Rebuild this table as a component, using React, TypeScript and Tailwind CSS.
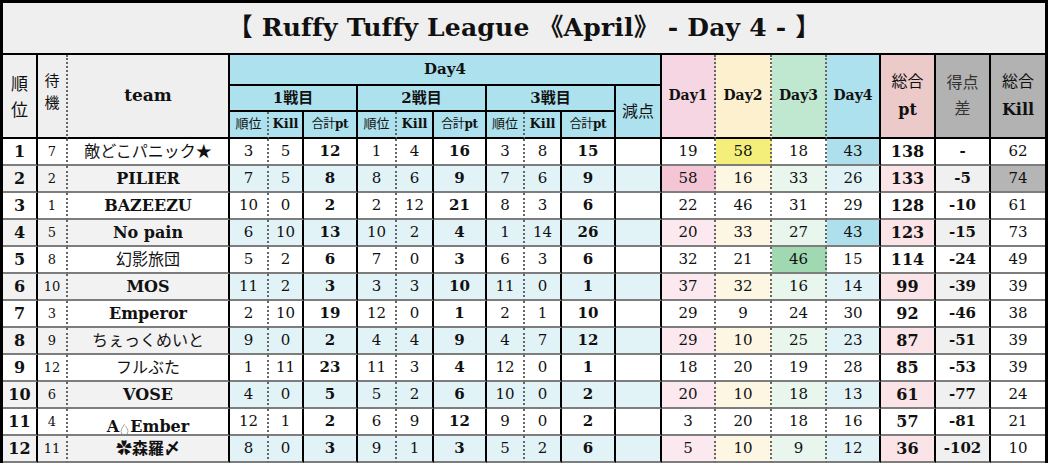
import React from 'react';

type Row = (string | number)[];

const rows: Row[] = [
  [1, 7, '敵どこパニック★', 3, 5, 12, 1, 4, 16, 3, 8, 15, '', 19, 58, 18, 43, 138, '-', 62],
  [2, 2, 'PILIER', 7, 5, 8, 8, 6, 9, 7, 6, 9, '', 58, 16, 33, 26, 133, -5, 74],
  [3, 1, 'BAZEEZU', 10, 0, 2, 2, 12, 21, 8, 3, 6, '', 22, 46, 31, 29, 128, -10, 61],
  [4, 5, 'No pain', 6, 10, 13, 10, 2, 4, 1, 14, 26, '', 20, 33, 27, 43, 123, -15, 73],
  [5, 8, '幻影旅団', 5, 2, 6, 7, 0, 3, 6, 3, 6, '', 32, 21, 46, 15, 114, -24, 49],
  [6, 10, 'MOS', 11, 2, 3, 3, 3, 10, 11, 0, 1, '', 37, 32, 16, 14, 99, -39, 39],
  [7, 3, 'Emperor', 2, 10, 19, 12, 0, 1, 2, 1, 10, '', 29, 9, 24, 30, 92, -46, 38],
  [8, 9, 'ちぇっくめいと', 9, 0, 2, 4, 4, 9, 4, 7, 12, '', 29, 10, 25, 23, 87, -51, 39],
  [9, 12, 'フルぶた', 1, 11, 23, 11, 3, 4, 12, 0, 1, '', 18, 20, 19, 28, 85, -53, 39],
  [10, 6, 'VOSE', 4, 0, 5, 5, 2, 6, 10, 0, 2, '', 20, 10, 18, 13, 61, -77, 24],
  [11, 4, 'A Ember', 12, 1, 2, 6, 9, 12, 9, 0, 2, '', 3, 20, 18, 16, 57, -81, 21],
  [12, 11, '✿森羅〆', 8, 0, 3, 9, 1, 3, 5, 2, 6, '', 5, 10, 9, 12, 36, -102, 10],
];

// column styles: right border, font, odd bg, even bg
const SOLID = 'border-r-2 border-r-black';
const DOT = 'border-r-2 border-r-[#666] [border-right-style:dotted]';
const cyan = 'bg-[#e2f3f8]';

const cols: { border: string; text: string; odd: string; even: string }[] = [
  { border: SOLID, text: 'font-bold text-[16px]', odd: 'bg-white', even: 'bg-[#f2f2f2]' },
  { border: DOT, text: 'text-[13px]', odd: 'bg-white', even: 'bg-[#f2f2f2]' },
  { border: SOLID, text: 'text-[16px]', odd: 'bg-white', even: 'bg-[#f2f2f2]' },
  { border: DOT, text: 'text-[15px]', odd: 'bg-white', even: cyan },
  { border: SOLID, text: 'text-[15px]', odd: 'bg-white', even: cyan },
  { border: SOLID, text: 'font-bold text-[15px]', odd: 'bg-white', even: cyan },
  { border: DOT, text: 'text-[15px]', odd: 'bg-white', even: cyan },
  { border: SOLID, text: 'text-[15px]', odd: 'bg-white', even: cyan },
  { border: SOLID, text: 'font-bold text-[15px]', odd: 'bg-white', even: cyan },
  { border: DOT, text: 'text-[15px]', odd: 'bg-white', even: cyan },
  { border: SOLID, text: 'text-[15px]', odd: 'bg-white', even: cyan },
  { border: SOLID, text: 'font-bold text-[15px]', odd: 'bg-white', even: cyan },
  { border: SOLID, text: 'text-[15px]', odd: 'bg-white', even: cyan },
  { border: DOT, text: 'text-[15px]', odd: 'bg-white', even: 'bg-[#fce8ef]' },
  { border: DOT, text: 'text-[15px]', odd: 'bg-white', even: 'bg-[#fdf6e3]' },
  { border: DOT, text: 'text-[15px]', odd: 'bg-white', even: 'bg-[#e8f6ee]' },
  { border: SOLID, text: 'text-[15px]', odd: 'bg-white', even: cyan },
  { border: SOLID, text: 'font-bold text-[16px]', odd: 'bg-white', even: 'bg-[#fbe4e7]' },
  { border: SOLID, text: 'font-bold text-[15px]', odd: 'bg-white', even: 'bg-[#f0f0f0]' },
  { border: '', text: 'text-[15px]', odd: 'bg-white', even: 'bg-white' },
];

// highlighted cells, keyed "row-col"
const highlight: Record<string, string> = {
  '0-14': 'bg-[#f4ef7b]',
  '0-16': 'bg-[#ade0ec]',
  '1-13': 'bg-[#f3c5d5]',
  '1-19': 'bg-[#b5b5b5]',
  '3-16': 'bg-[#ade0ec]',
  '4-15': 'bg-[#9fd8b1]',
};

const jpNames = ['敵どこパニック★', '幻影旅団', 'ちぇっくめいと', 'フルぶた'];

function TeamName({ name }: { name: string }) {
  if (name === 'A Ember') {
    return (
      <span className="font-bold translate-y-[5px] flex items-end">
        A
        <svg width="9" height="13" viewBox="0 0 9 13" className="mx-[1px] mb-[3px]">
          <path d="M4.5 1 C3 4 1 6 1 8.5 A3.5 3.5 0 0 0 8 8.5 C8 6.5 6.5 5 5.5 3" fill="none" stroke="#999" strokeWidth="0.9" />
        </svg>
        Ember
      </span>
    );
  }
  return <span className={jpNames.includes(name) ? 'font-normal' : 'font-bold'}>{name}</span>;
}

const H = 'flex items-center justify-center border-b-2 border-b-black text-center leading-tight';

export default function App() {
  return (
    <div className="w-[1048px] h-[465px] overflow-hidden bg-white font-['DejaVu_Serif','Noto_Sans_CJK_JP',serif] text-[#111]">
      <div className="border-[3px] border-b-0 border-black">
        <div className="h-[52px] bg-[#efefef] border-b-2 border-b-black flex items-center justify-center text-[25px] font-bold tracking-[0.2px]">
          【 Ruffy Tuffy League 《April》 - Day 4 - 】
        </div>
        <div className="grid grid-cols-[35px_30px_162px_39px_35px_54px_39px_37px_53px_38px_37px_54px_46px_54px_56px_55px_54px_55px_55px_54px] grid-rows-[31px_26px_27px_repeat(12,27px)]">
          {/* header */}
          <div className={`${H} ${SOLID} col-start-1 row-start-1 row-span-3 bg-[#efefef] text-[17px] !leading-[26px] font-['Noto_Sans_CJK_JP',sans-serif]`}>順<br />位</div>
          <div className={`${H} ${DOT} col-start-2 row-start-1 row-span-3 bg-[#efefef] text-[15px] !leading-[22px] font-['Noto_Sans_CJK_JP',sans-serif] pb-[10px]`}>待<br />機</div>
          <div className={`${H} ${SOLID} col-start-3 row-start-1 row-span-3 bg-[#efefef] text-[17px] font-bold`}>team</div>
          <div className={`${H} ${SOLID} col-start-4 col-span-10 row-start-1 bg-[#ade1ed] text-[15px] font-bold`}>Day4</div>
          {['1', '2', '3'].map((n, i) => (
            <div key={n} className={`${H} ${SOLID} row-start-2 col-span-3 bg-[#ade1ed] text-[15px] font-bold ${i === 0 ? 'col-start-4' : i === 1 ? 'col-start-7' : 'col-start-10'}`}>
              {n}戦目
            </div>
          ))}
          <div className={`${H} ${SOLID} col-start-13 row-start-2 row-span-2 bg-[#ade1ed] text-[16px]`}>減点</div>
          {[4, 7, 10].map((c) => (
            <React.Fragment key={c}>
              <div className={`${H} ${DOT} row-start-3 bg-[#ade1ed] text-[13px] ${c === 4 ? 'col-start-4' : c === 7 ? 'col-start-7' : 'col-start-10'}`}>順位</div>
              <div className={`${H} ${SOLID} row-start-3 bg-[#ade1ed] text-[13px] font-bold ${c === 4 ? 'col-start-5' : c === 7 ? 'col-start-8' : 'col-start-11'}`}>Kill</div>
              <div className={`${H} ${SOLID} row-start-3 bg-[#ade1ed] text-[12px] tracking-[-0.3px] ${c === 4 ? 'col-start-6' : c === 7 ? 'col-start-9' : 'col-start-12'}`}>
                合計<span className="font-bold">pt</span>
              </div>
            </React.Fragment>
          ))}
          <div className={`${H} ${DOT} col-start-14 row-start-1 row-span-3 bg-[#f5d6e2] text-[14px] font-bold`}>Day1</div>
          <div className={`${H} ${DOT} col-start-15 row-start-1 row-span-3 bg-[#fdf0cf] text-[14px] font-bold`}>Day2</div>
          <div className={`${H} ${DOT} col-start-16 row-start-1 row-span-3 bg-[#c0e7cf] text-[14px] font-bold`}>Day3</div>
          <div className={`${H} ${SOLID} col-start-17 row-start-1 row-span-3 bg-[#ade1ed] text-[14px] font-bold`}>Day4</div>
          <div className={`${H} ${SOLID} col-start-18 row-start-1 row-span-3 bg-[#eccaca] text-[16px] !leading-[28px]`}>
            <span>総合<br /><span className="font-bold">pt</span></span>
          </div>
          <div className={`${H} ${SOLID} col-start-19 row-start-1 row-span-3 bg-[#b2b2b2] text-[16px] !leading-[26px] text-[#333]`}>得点<br />差</div>
          <div className={`${H} col-start-20 row-start-1 row-span-3 bg-[#b2b2b2] text-[16px] !leading-[28px]`}>
            <span>総合<br /><span className="font-bold">Kill</span></span>
          </div>

          {/* data */}
          {rows.map((row, r) =>
            row.map((v, c) => {
              const col = cols[c];
              const bg = highlight[`${r}-${c}`] ?? (r % 2 === 1 ? col.even : col.odd);
              return (
                <div
                  key={`${r}-${c}`}
                  className={`flex items-center justify-center border-b-2 border-b-[#7d7d7d] ${col.border} ${col.text} ${bg} whitespace-nowrap overflow-hidden`}
                >
                  {c === 2 ? <TeamName name={String(v)} /> : v}
                </div>
              );
            })
          )}
        </div>
      </div>
    </div>
  );
}
